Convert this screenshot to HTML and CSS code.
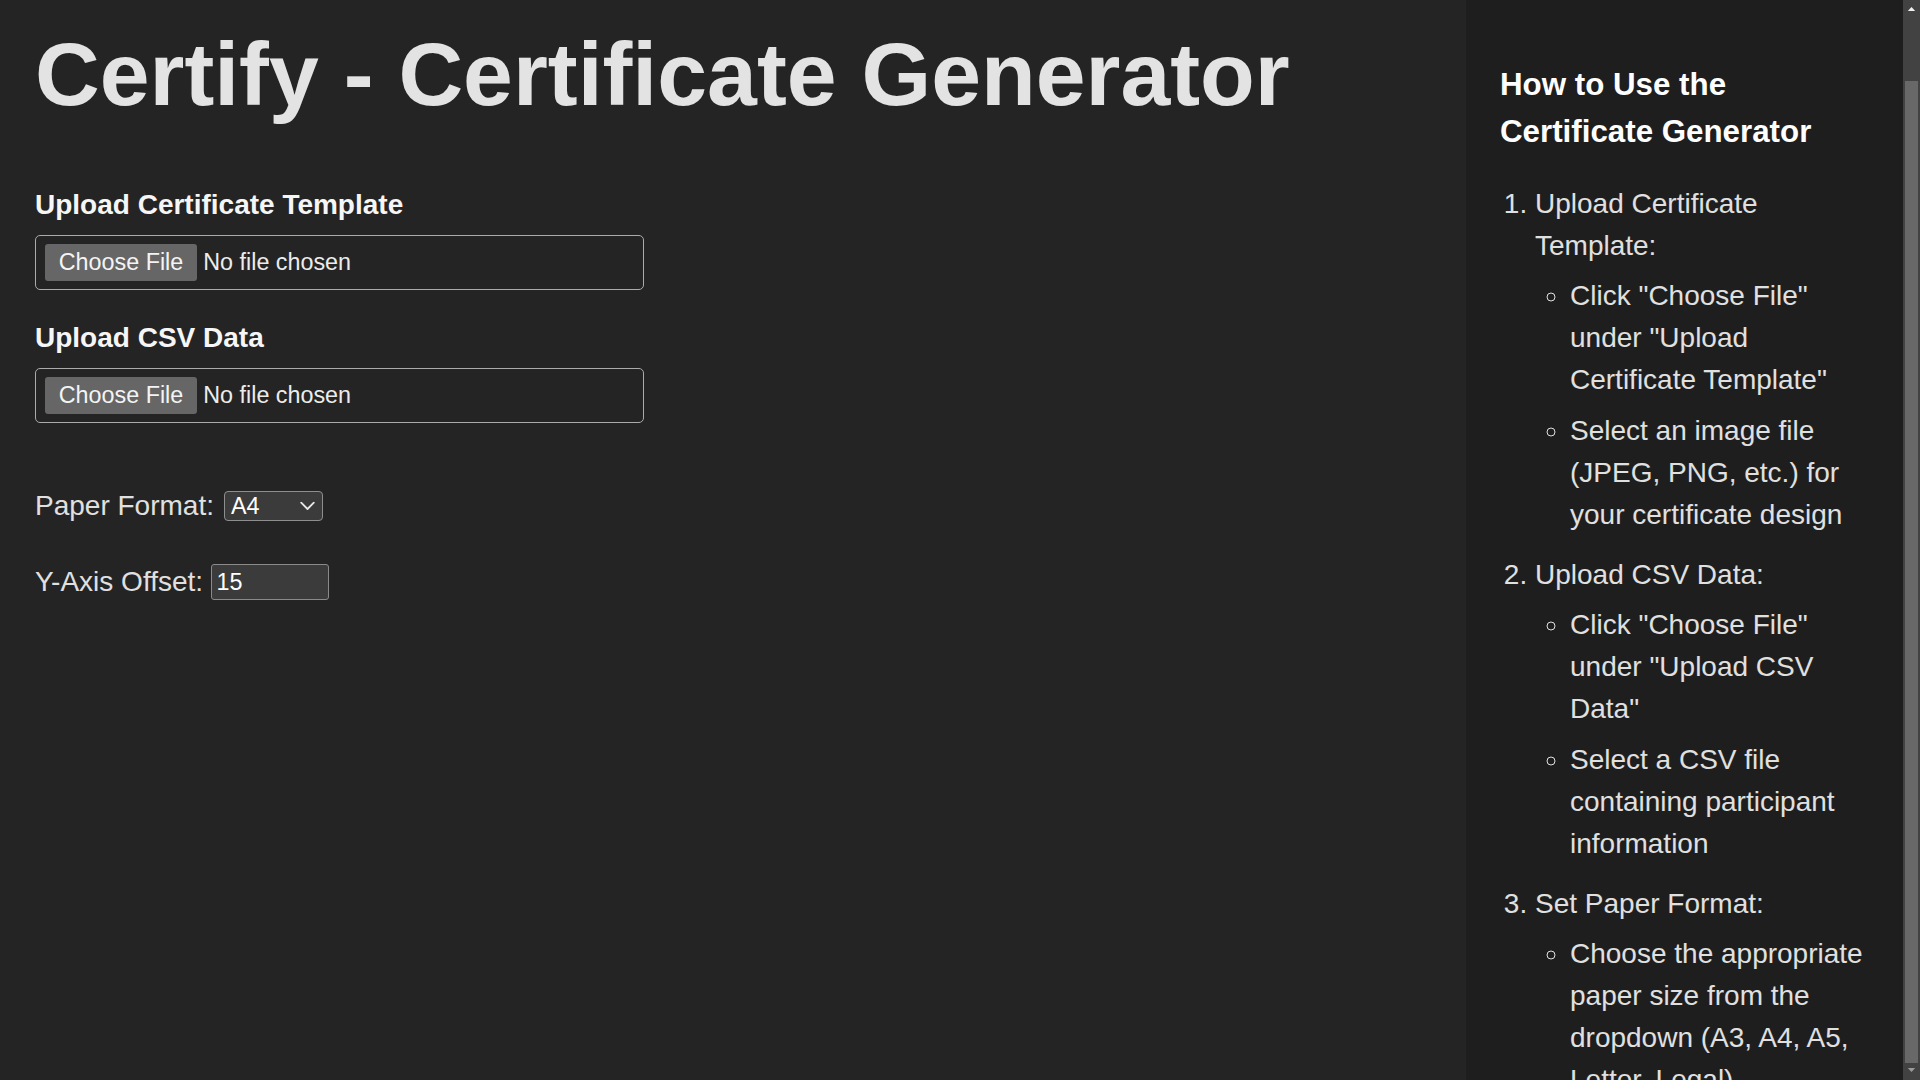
FILE: index.html
```html
<!DOCTYPE html>
<html lang="en">
<head>
<meta charset="utf-8">
<title>Certify - Certificate Generator</title>
<link rel="stylesheet" href="styles.css">
</head>
<body>
<div class="layout">
  <main class="main">
    <h1 class="title">Certify - Certificate Generator</h1>

    <div class="field">
      <label class="field-label" for="template">Upload Certificate Template</label>
      <input class="file-input" type="file" id="template" accept="image/*">
    </div>

    <div class="field">
      <label class="field-label" for="csv">Upload CSV Data</label>
      <input class="file-input" type="file" id="csv" accept=".csv">
    </div>

    <div class="option-row paper-row">
      <label class="option-label" for="paper">Paper Format:</label>
      <span class="select-wrap">
        <select class="select" id="paper">
          <option>A3</option>
          <option selected>A4</option>
          <option>A5</option>
          <option>Letter</option>
          <option>Legal</option>
        </select>
        <svg class="chevron" width="15" height="9" viewBox="0 0 15 9" aria-hidden="true">
          <polyline points="1.2,1.2 7.5,7.5 13.8,1.2" fill="none" stroke="#e6e6e6" stroke-width="1.8" stroke-linecap="round" stroke-linejoin="round"/>
        </svg>
      </span>
    </div>

    <div class="option-row offset-row">
      <label class="option-label" for="offset">Y-Axis Offset:</label>
      <input class="number-input" type="number" id="offset" value="15">
    </div>
  </main>

  <aside class="sidebar">
    <h2 class="sidebar-title">How to Use the Certificate Generator</h2>
    <ol class="steps">
      <li>Upload Certificate Template:
        <ul class="substeps">
          <li>Click "Choose File" under "Upload Certificate Template"</li>
          <li>Select an image file (JPEG, PNG, etc.) for your certificate design</li>
        </ul>
      </li>
      <li>Upload CSV Data:
        <ul class="substeps">
          <li>Click "Choose File" under "Upload CSV Data"</li>
          <li>Select a CSV file containing participant information</li>
        </ul>
      </li>
      <li>Set Paper Format:
        <ul class="substeps">
          <li>Choose the appropriate paper size from the dropdown (A3, A4, A5, Letter, Legal)</li>
        </ul>
      </li>
    </ol>
  </aside>

  <div class="scrollbar" aria-hidden="true">
    <div class="sb-button">
      <svg width="17" height="17" viewBox="0 0 17 17"><polygon points="4.8,11 8.5,7 12.2,11" fill="#f0f0f0"/></svg>
    </div>
    <div class="sb-gap"></div>
    <div class="sb-thumb"></div>
    <div class="sb-button">
      <svg width="17" height="17" viewBox="0 0 17 17"><polygon points="4.8,5 12.2,5 8.5,9" fill="#9a9a9a"/></svg>
    </div>
  </div>
</div>
</body>
</html>
```

FILE: styles.css
```css
html, body {
  margin: 0;
  padding: 0;
  height: 100%;
  overflow: hidden;
}

body {
  font-family: "Liberation Sans", Arial, sans-serif;
  color: #e0e0e0;
  background: #242424;
}

.layout {
  display: flex;
  height: 100vh;
}

/* ---------- main column ---------- */
.main {
  flex: 1;
  min-width: 0;
  box-sizing: border-box;
  padding: 23.2px 35px 0;
}

.title {
  margin: 0 0 62.5px;
  font-size: 89.6px;
  line-height: 103px;
  font-weight: bold;
  color: #e3e3e3;
}

.field + .field {
  margin-top: 32.1px;
}

.field-label {
  display: block;
  font-size: 28px;
  line-height: 32.2px;
  font-weight: bold;
  color: #f6f6f6;
  margin-bottom: 13.7px;
}

.file-input {
  display: block;
  box-sizing: border-box;
  width: 609px;
  height: 55px;
  padding: 8.5px 8.75px;
  border: 1px solid #ababab;
  border-radius: 5px;
  background: transparent;
  font-family: "Liberation Sans", Arial, sans-serif;
  font-size: 23.33px;
  color: #ececec;
}

.file-input::file-selector-button {
  height: 36.5px;
  margin: 0 6px 0 0;
  padding: 0 14px;
  border: none;
  border-radius: 3px;
  background: #666666;
  color: #f4f4f4;
  font-family: inherit;
  font-size: 23.33px;
}

.option-row {
  display: flex;
  align-items: center;
}

.paper-row {
  margin-top: 67.5px;
}

.offset-row {
  margin-top: 42.2px;
}

.option-label {
  font-size: 28px;
  line-height: 32.2px;
  color: #e0e0e0;
}

.select-wrap {
  position: relative;
  display: inline-flex;
  margin-left: 10px;
}

.select {
  appearance: none;
  -webkit-appearance: none;
  box-sizing: border-box;
  width: 99px;
  height: 29.5px;
  padding: 0 6px;
  border: 1px solid #8e8e8e;
  border-radius: 4px;
  background: #3b3b3b;
  color: #ffffff;
  font-family: "Liberation Sans", Arial, sans-serif;
  font-size: 23.33px;
  line-height: 27px;
}

.chevron {
  position: absolute;
  right: 8px;
  top: 50%;
  transform: translateY(-50%);
  pointer-events: none;
}

.number-input {
  appearance: textfield;
  -moz-appearance: textfield;
  box-sizing: border-box;
  width: 118px;
  height: 36px;
  margin-left: 7.5px;
  padding: 0 5px;
  border: 1px solid #8a8a8a;
  border-radius: 3px;
  background: #3b3b3b;
  color: #ffffff;
  font-family: "Liberation Sans", Arial, sans-serif;
  font-size: 23.33px;
}

.number-input::-webkit-inner-spin-button,
.number-input::-webkit-outer-spin-button {
  -webkit-appearance: none;
  margin: 0;
}

/* ---------- sidebar ---------- */
.sidebar {
  flex: none;
  width: 437px;
  box-sizing: border-box;
  padding: 35px 34px;
  background: #1e1e1e;
  overflow: hidden;
  line-height: 1.5;
}

.sidebar-title {
  margin: 25.5px 0 28.6px;
  font-size: 31.3px;
  line-height: 47px;
  font-weight: bold;
  color: #ffffff;
}

.steps {
  margin: 0;
  padding-left: 35px;
  font-size: 28px;
  line-height: 42px;
  color: #e0e0e0;
}

.steps > li {
  margin-bottom: 18px;
}

.substeps {
  margin: 8px 0 0;
  padding-left: 35px;
}

.substeps > li {
  margin-bottom: 9px;
}

/* ---------- window scrollbar ---------- */
.scrollbar {
  flex: none;
  width: 17px;
  display: flex;
  flex-direction: column;
  background: #424242;
}

.sb-button {
  flex: none;
  height: 17px;
}

.sb-button svg {
  display: block;
}

.sb-gap {
  flex: none;
  height: 64px;
}

.sb-thumb {
  flex: 1;
  margin: 0 2px;
  background: #686868;
}
```
